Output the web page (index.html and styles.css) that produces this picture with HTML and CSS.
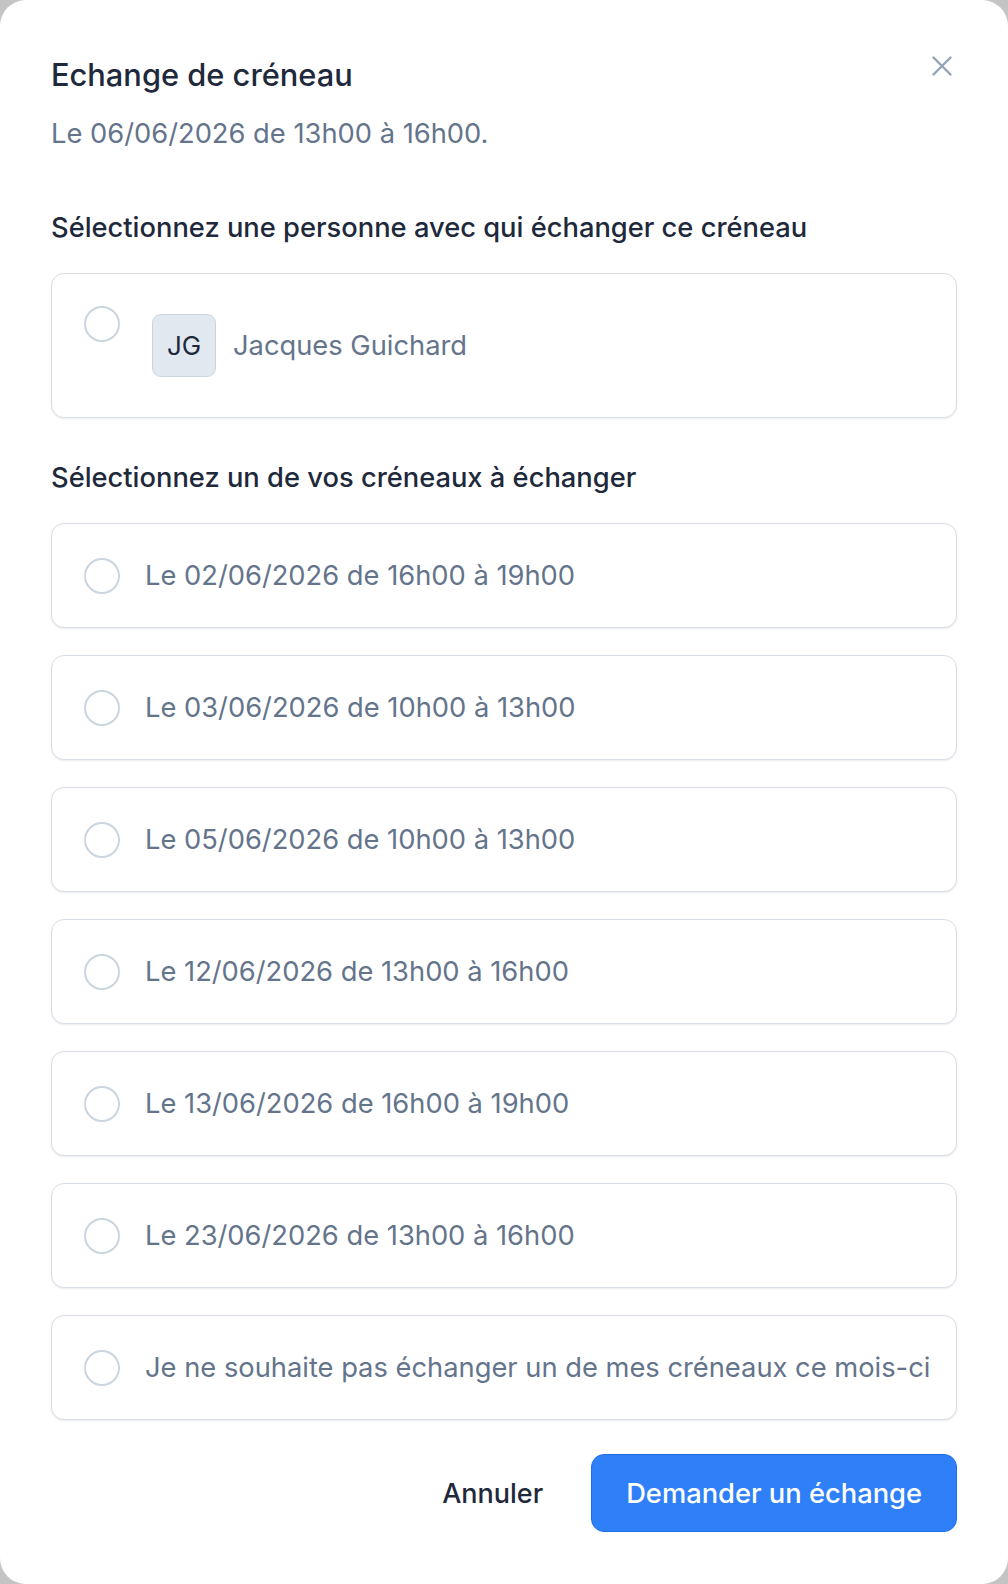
FILE: index.html
```html
<!DOCTYPE html>
<html lang="fr">
<head>
    <meta charset="UTF-8">
    <meta name="viewport" content="width=device-width, initial-scale=1.0">
    <title>Echange de créneau</title>
    <link rel="stylesheet" href="styles.css">
</head>
<body>

    <div class="modal">
        <!-- Header -->
        <div class="modal-header">
            <h2 class="modal-title">Echange de créneau</h2>
            <button class="close-btn" aria-label="Fermer">
                <svg width="20" height="20" viewBox="0 0 20 20" fill="none">
                    <path d="M1.5 1.5L18.5 18.5M18.5 1.5L1.5 18.5" stroke="#94a3b8" stroke-width="2.4" stroke-linecap="round"/>
                </svg>
            </button>
        </div>
        <p class="modal-subtitle">Le 06/06/2026 de 13h00 à 16h00.</p>

        <!-- Person selection -->
        <h3 class="section-label first">Sélectionnez une personne avec qui échanger ce créneau</h3>
        <label class="option person-option">
            <input type="radio" name="person" class="radio">
            <div class="person">
                <span class="avatar">JG</span>
                <span class="option-text">Jacques Guichard</span>
            </div>
        </label>

        <!-- Slot selection -->
        <h3 class="section-label">Sélectionnez un de vos créneaux à échanger</h3>
        <div class="slot-list">
            <label class="option slot-option">
                <input type="radio" name="slot" class="radio">
                <span class="option-text">Le 02/06/2026 de 16h00 à 19h00</span>
            </label>
            <label class="option slot-option">
                <input type="radio" name="slot" class="radio">
                <span class="option-text">Le 03/06/2026 de 10h00 à 13h00</span>
            </label>
            <label class="option slot-option">
                <input type="radio" name="slot" class="radio">
                <span class="option-text">Le 05/06/2026 de 10h00 à 13h00</span>
            </label>
            <label class="option slot-option">
                <input type="radio" name="slot" class="radio">
                <span class="option-text">Le 12/06/2026 de 13h00 à 16h00</span>
            </label>
            <label class="option slot-option">
                <input type="radio" name="slot" class="radio">
                <span class="option-text">Le 13/06/2026 de 16h00 à 19h00</span>
            </label>
            <label class="option slot-option">
                <input type="radio" name="slot" class="radio">
                <span class="option-text">Le 23/06/2026 de 13h00 à 16h00</span>
            </label>
            <label class="option slot-option">
                <input type="radio" name="slot" class="radio">
                <span class="option-text">Je ne souhaite pas échanger un de mes créneaux ce mois-ci</span>
            </label>
        </div>

        <!-- Footer -->
        <div class="modal-footer">
            <button class="btn-cancel">Annuler</button>
            <button class="btn-primary">Demander un échange</button>
        </div>
    </div>

</body>
</html>
```

FILE: styles.css
```css
* {
    box-sizing: border-box;
}
body {
    margin: 0;
    background: #c4c4c4;
    font-family: Inter, "Noto Sans", Arial, sans-serif;
}
.modal {
    min-height: 1584px;
    background: #fff;
    border-radius: 26px;
    padding: 55px 51px 52px;
}
.modal-header {
    display: flex;
    justify-content: space-between;
    align-items: flex-start;
}
.modal-title {
    margin: 0;
    font-size: 30.8px;
    line-height: 40px;
    font-weight: 500;
    color: #1e293b;
}
.close-btn {
    background: none;
    border: none;
    padding: 0;
    margin: 1px 5px 0 0;
    width: 20px;
    height: 20px;
    cursor: pointer;
}
.modal-subtitle {
    margin: 21px 0 0;
    font-size: 27.3px;
    line-height: 36px;
    color: #64748b;
}
.section-label {
    margin: 42px 0 27px;
    font-size: 27.3px;
    line-height: 36px;
    font-weight: 500;
    color: #1e293b;
}
.section-label.first {
    margin-top: 58px;
}
.option {
    display: flex;
    border: 1px solid #d9dee6;
    border-radius: 13px;
    background: #fff;
    box-shadow: 0 1px 2px rgba(15, 23, 42, 0.08);
    padding: 0 32px;
    cursor: pointer;
}
.radio {
    appearance: none;
    margin: 0;
    flex: none;
    width: 36px;
    height: 36px;
    border: 2px solid #cbd5e1;
    border-radius: 50%;
    background: #fff;
}
.person-option {
    align-items: flex-start;
    padding-top: 32px;
    padding-bottom: 32px;
}
.person {
    display: flex;
    align-items: center;
    gap: 17px;
    margin-left: 32px;
    padding: 8px 0;
}
.avatar {
    width: 64px;
    height: 63px;
    display: flex;
    align-items: center;
    justify-content: center;
    background: #e2e8f0;
    border: 1px solid #cbd5e1;
    border-radius: 9px;
    font-size: 26px;
    color: #1e293b;
}
.option-text {
    font-size: 27.3px;
    line-height: 36px;
    color: #64748b;
    white-space: nowrap;
}
.slot-list {
    display: flex;
    flex-direction: column;
    gap: 27px;
}
.slot-option {
    height: 105px;
    align-items: center;
    gap: 25px;
}
.modal-footer {
    display: flex;
    justify-content: flex-end;
    align-items: center;
    gap: 24px;
    margin-top: 34px;
}
.btn-cancel {
    background: none;
    border: none;
    padding: 0 24px;
    font-family: inherit;
    font-size: 27px;
    font-weight: 500;
    color: #1e293b;
    cursor: pointer;
}
.btn-primary {
    height: 78px;
    padding: 0 34px;
    background: #2f7ff9;
    border: 1px solid #1f6fe6;
    border-radius: 13px;
    font-family: inherit;
    font-size: 27.3px;
    font-weight: 500;
    color: #fff;
    cursor: pointer;
}
```
